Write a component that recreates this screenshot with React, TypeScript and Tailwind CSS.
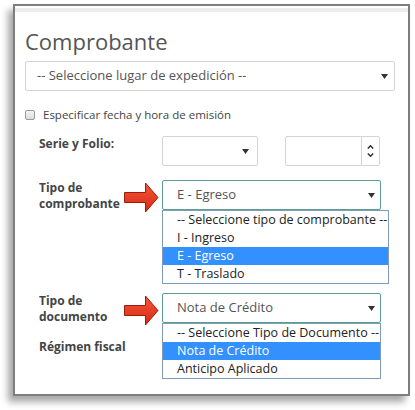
import type { ReactNode } from 'react'

const FONT = "font-['Open_Sans',sans-serif]"

function Caret() {
  return (
    <svg width="7" height="5" viewBox="0 0 7 5" aria-hidden="true">
      <path d="M0 0h7L3.5 5z" fill="#333" />
    </svg>
  )
}

function RedArrow() {
  return (
    <svg width="35" height="31" viewBox="0 0 35 31" aria-hidden="true" className="shrink-0">
      <defs>
        <linearGradient id="ra" x1="0" y1="0" x2="0" y2="1">
          <stop offset="0" stopColor="#f2573a" />
          <stop offset="1" stopColor="#d92a12" />
        </linearGradient>
      </defs>
      <path
        d="M0.5 10.5h21v-9.5l12.5 14.5l-12.5 14.5v-9.5h-21z"
        fill="url(#ra)"
        stroke="#9c1d0c"
        strokeWidth="1"
        strokeLinejoin="miter"
      />
    </svg>
  )
}

function Select({
  value,
  focused,
  className = '',
}: {
  value: string
  focused?: boolean
  className?: string
}) {
  return (
    <div
      className={[
        'flex h-[30px] items-center justify-between rounded-[2px] border bg-white pl-[14px] pr-[6px] text-[13px] text-[#555]',
        focused ? 'border-[#5b9d8f]' : 'border-[#d4d4d4]',
        className,
      ].join(' ')}
    >
      <span className="truncate">{value}</span>
      <Caret />
    </div>
  )
}

function OptionList({
  items,
  active,
  className = '',
}: {
  items: string[]
  active: number
  className?: string
}) {
  return (
    <div className={'absolute left-0 top-[30px] z-10 border border-[#7f9db9] bg-white ' + className}>
      {items.map((it, i) => (
        <div
          key={it}
          className={[
            'h-[18px] whitespace-nowrap pl-[14px] text-[12.5px] leading-[18px]',
            i === active ? 'bg-[#3390ff] text-white' : 'text-[#222]',
          ].join(' ')}
        >
          {it}
        </div>
      ))}
    </div>
  )
}

function Label({ children, className = '' }: { children: ReactNode; className?: string }) {
  return (
    <div className={'text-[12px] font-bold leading-[16px] text-[#444] ' + className}>{children}</div>
  )
}

export default function App() {
  return (
    <div className={'h-[410px] w-[415px] bg-white pl-[13px] pt-[4px] ' + FONT}>
      <div className="h-[392px] w-[397px] border-2 border-[#7e7e7e] bg-white shadow-[-5px_6px_7px_rgba(0,0,0,0.35)]">
        <div className="mt-[2px] h-[4px] bg-[#ececec]" />

        <div className="pl-[10px] pr-[13px]">
          <h1 className="mt-[14px] text-[22px] leading-[30px] text-[#555]">Comprobante</h1>

          <Select value="-- Seleccione lugar de expedición --" className="mt-[5px] !pl-[11px] pr-[6px]" />

          <label className="mt-[14px] flex h-[19px] items-center gap-[8px] text-[11.5px] text-[#444]">
            <span className="h-[10px] w-[10px] rounded-[2px] border border-[#999] bg-gradient-to-b from-[#f4f4f4] to-[#dcdcdc]" />
            Especificar fecha y hora de emisión
          </label>

          {/* Serie y folio */}
          <div className="mt-[12px] flex">
            <Label className="ml-[14px] w-[123px]">Serie y Folio:</Label>
            <Select value="" className="w-[96px] !pr-[8px]" />
            <div className="ml-[27px] flex h-[30px] w-[95px] rounded-[2px] border border-[#d4d4d4]">
              <div className="flex-1" />
              <div className="flex w-[18px] flex-col items-center justify-center gap-[4px] border-l border-[#d4d4d4]">
                <svg width="7" height="4" viewBox="0 0 7 4" aria-hidden="true">
                  <path d="M0.8 3.5l2.7-2.7l2.7 2.7" fill="none" stroke="#333" strokeWidth="1.5" />
                </svg>
                <svg width="7" height="4" viewBox="0 0 7 4" aria-hidden="true">
                  <path d="M0.8 0.5l2.7 2.7l2.7-2.7" fill="none" stroke="#333" strokeWidth="1.5" />
                </svg>
              </div>
            </div>
          </div>

          {/* Tipo de comprobante */}
          <div className="mt-[14px] flex">
            <Label className="ml-[14px] w-[85px]">
              Tipo de
              <br />
              comprobante
            </Label>
            <div className="mt-[2px]">
              <RedArrow />
            </div>
            <div className="relative ml-[3px]">
              <Select value="E - Egreso" focused className="w-[219px] !pr-[5px]" />
              <OptionList
                className="w-[227px]"
                active={2}
                items={['-- Seleccione tipo de comprobante --', 'I - Ingreso', 'E - Egreso', 'T - Traslado']}
              />
            </div>
          </div>

          {/* Tipo de documento */}
          <div className="mt-[80px] flex">
            <Label className="ml-[14px] w-[85px]">
              Tipo de
              <br />
              documento
            </Label>
            <div className="mt-[2px]">
              <RedArrow />
            </div>
            <div className="relative ml-[3px]">
              <Select value="Nota de Crédito" focused className="w-[219px] !pr-[5px]" />
              <OptionList
                className="w-[219px]"
                active={1}
                items={['-- Seleccione Tipo de Documento --', 'Nota de Crédito', 'Anticipo Aplicado']}
              />
            </div>
          </div>

          <Label className="ml-[14px] mt-[13px]">Régimen fiscal</Label>
        </div>
      </div>
    </div>
  )
}
